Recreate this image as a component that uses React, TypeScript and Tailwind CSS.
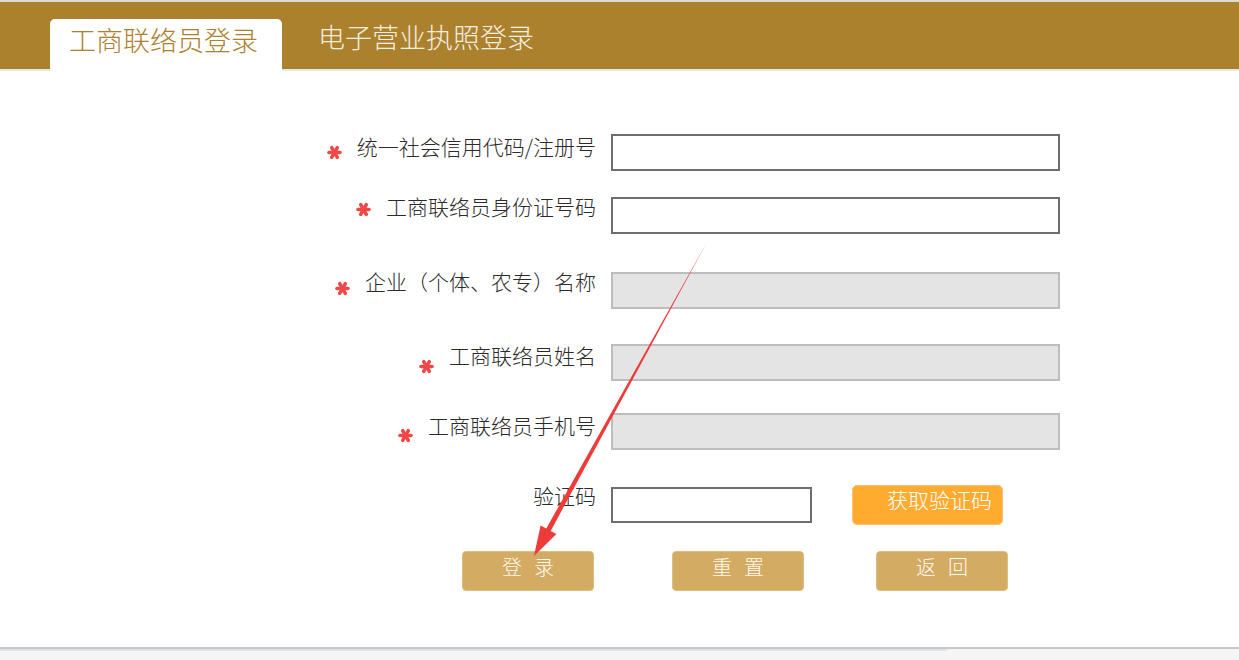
import type { FunctionComponent } from 'react'

type Row = {
  label: string
  required: boolean
  disabled: boolean
  rowMt: string
  labelMt: string
  starMt: string
}

const rows: Row[] = [
  { label: '统一社会信用代码/注册号', required: true, disabled: false, rowMt: 'mt-[63px]', labelMt: 'mt-0', starMt: 'mt-[11px]' },
  { label: '工商联络员身份证号码', required: true, disabled: false, rowMt: 'mt-[26px]', labelMt: '-mt-[3px]', starMt: 'mt-[5px]' },
  { label: '企业（个体、农专）名称', required: true, disabled: true, rowMt: 'mt-[38px]', labelMt: '-mt-[3px]', starMt: 'mt-[9px]' },
  { label: '工商联络员姓名', required: true, disabled: true, rowMt: 'mt-[35px]', labelMt: '-mt-[1px]', starMt: 'mt-[15px]' },
  { label: '工商联络员手机号', required: true, disabled: true, rowMt: 'mt-[32px]', labelMt: 'mt-0', starMt: 'mt-[15px]' },
]

function Star({ className }: { className: string }) {
  return (
    <svg width="15" height="15" viewBox="0 0 15 15" className={className}>
      <g stroke="#ee4848" strokeWidth="3.6" strokeLinecap="round">
        <line x1="2" y1="7.5" x2="13" y2="7.5" />
        <line x1="4.7" y1="2.7" x2="10.3" y2="12.3" />
        <line x1="10.3" y1="2.7" x2="4.7" y2="12.3" />
      </g>
    </svg>
  )
}

function ActionButton({ text }: { text: string }) {
  return (
    <button className="w-[132px] h-[40px] rounded-[4px] bg-[#d3ab62] border border-[#dcbd82] text-[#fffaf0] text-[20px] font-light leading-[24px] tracking-[12px] pl-[12px] pb-[8px]">
      {text}
    </button>
  )
}

export default function App(): ReturnType<FunctionComponent> {
  return (
    <div className="relative h-[660px] w-full overflow-hidden bg-[#f5f5f5] font-light font-['Noto_Sans_CJK_SC','Liberation_Sans',sans-serif]">
      <div className="h-[647px] bg-white">
        {/* header tabs */}
        <div className="h-[71px] border-t-2 border-[#dcdad4] bg-[linear-gradient(to_bottom,#ab812e_66px,#94844a_66px,#94844a_67px,#efe9da_67px)] flex items-end pl-[50px]">
          <div className="w-[232px] h-[52px] bg-white rounded-t-[5px] pl-[19px] pt-[6px] text-[27px] leading-[30px] text-[#ac812e]">
            工商联络员登录
          </div>
          <div className="h-[52px] ml-[36px] pt-[3px] text-[27px] leading-[30px] text-[#f4eee0]">
            电子营业执照登录
          </div>
        </div>

        {/* form */}
        {rows.map((r) => (
          <div key={r.label} className={`flex h-[37px] ${r.rowMt}`}>
            <div className="w-[596px] flex justify-end items-start">
              {r.required && <Star className={`shrink-0 ${r.starMt}`} />}
              <span className={`ml-[15px] text-[21px] leading-[24px] text-[#2b2b2b] whitespace-nowrap ${r.labelMt}`}>
                {r.label}
              </span>
            </div>
            <input
              disabled={r.disabled}
              className={
                r.disabled
                  ? 'ml-[15px] w-[449px] h-[37px] border-2 border-[#bdbdbd] bg-[#e4e4e4] outline-none'
                  : 'ml-[15px] w-[449px] h-[37px] border-2 border-[#6e6e6e] bg-white outline-none'
              }
            />
          </div>
        ))}

        <div className="flex items-start h-[36px] mt-[37px]">
          <div className="w-[596px] flex justify-end">
            <span className="-mt-[4px] text-[21px] leading-[24px] text-[#2b2b2b]">验证码</span>
          </div>
          <input className="ml-[15px] w-[201px] h-[36px] border-2 border-[#6e6e6e] bg-white outline-none" />
          <button className="ml-[40px] -mt-[2px] w-[151px] h-[40px] rounded-[5px] bg-[#ffab30] border border-[#ffc170] text-white text-[21px] font-light leading-[24px] text-left pl-[34px] pb-[12px]">
            获取验证码
          </button>
        </div>

        <div className="flex mt-[28px] pl-[462px]">
          <ActionButton text="登录" />
          <div className="ml-[78px]">
            <ActionButton text="重置" />
          </div>
          <div className="ml-[72px]">
            <ActionButton text="返回" />
          </div>
        </div>
      </div>
      <div className="h-[2px] bg-[#c6c7c9]" />
      <div className="h-[2px] w-[947px] bg-[#dfe4ea]" />

      {/* red annotation arrow */}
      <svg className="absolute inset-0 pointer-events-none" width="1239" height="660" viewBox="0 0 1239 660">
        <polygon
          points="707,242 550.7,530.9 556.4,534 534,556 540.6,525.4 546.3,528.5"
          fill="#ef3a3a"
        />
      </svg>
    </div>
  )
}
